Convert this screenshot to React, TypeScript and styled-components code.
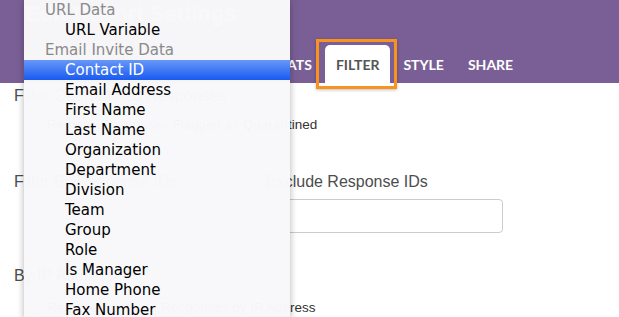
import React from "react";
import styled, { createGlobalStyle } from "styled-components";

const Global = createGlobalStyle`
  html, body { margin: 0; padding: 0; background: #fff; }
  body { width: 619px; height: 317px; overflow: hidden; position: relative; }
  * { box-sizing: border-box; }
`;

const Page = styled.div`
  position: relative;
  width: 619px;
  height: 317px;
  overflow: hidden;
  font-family: "Liberation Sans", Arial, sans-serif;
`;

const Header = styled.header`
  height: 83px;
  background: #7a5f96;
  display: flex;
  flex-direction: column;
  justify-content: space-between;
`;

const Title = styled.h1`
  margin: 0;
  padding: 2px 0 0 25px;
  height: 30px;
  line-height: 24px;
  color: #fff;
  font-family: "Liberation Sans", Arial, sans-serif;
  font-weight: 700;
  font-size: 22px;
`;

const TabBar = styled.nav`
  display: flex;
  gap: 2px;
  padding-left: 261px;
  height: 38px;
`;

const Tab = styled.div<{ $active?: boolean }>`
  position: relative;
  display: flex;
  align-items: center;
  padding: 0 11px;
  height: 38px;
  border-radius: 5px 5px 0 0;
  background: ${(p) => (p.$active ? "#fff" : "transparent")};
  color: ${(p) => (p.$active ? "#555" : "#fff")};
  font-family: Lato, "Open Sans", sans-serif;
  font-weight: 700;
  font-size: 14px;
  ${(p) =>
    p.$active &&
    `&::after {
      content: "";
      position: absolute;
      top: -6px; bottom: -6px; left: -9px; right: -7px;
      border: 3px solid #f7931e;
      box-shadow: 0 1px 3px rgba(0,0,0,0.25);
    }`}
`;

const Body = styled.main`
  padding: 3px 0 0 14px;
  color: #4d4d4d;
`;

const SectionTitle = styled.h2`
  margin: 0;
  font-size: 16px;
  font-weight: 400;
  line-height: 20px;
  color: #4d4d4d;
`;

const CheckRow = styled.label<{ $top: number }>`
  display: flex;
  align-items: center;
  gap: 4px;
  margin: ${(p) => p.$top}px 0 0 16px;
  height: 20px;
  font-size: 13.5px;
  color: #333;
`;

const Box = styled.span`
  width: 13px;
  height: 13px;
  border: 1px solid #bbb;
  border-radius: 3px;
  background: #fff;
  display: flex;
  align-items: center;
  justify-content: center;
  color: #4a90e2;
  font-size: 11px;
`;

const IdGrid = styled.div`
  display: grid;
  grid-template-columns: 252px 240px;
  margin-top: 38px;
`;

const Field = styled.div`
  display: flex;
  flex-direction: column;
  gap: 7px;
`;

const Input = styled.div<{ $indent: number }>`
  margin-left: ${(p) => p.$indent}px;
  width: 224px;
  height: 34px;
  border: 1px solid #ccc;
  border-radius: 4px;
  padding: 8px 10px;
  color: #bbb;
  font-size: 13px;
`;

const IpSection = styled.section`
  margin-top: 33px;
`;

const Menu = styled.ul`
  position: absolute;
  left: 24px;
  top: 0;
  width: 266px;
  margin: 0;
  padding: 0;
  list-style: none;
  background: rgba(248, 248, 250, 0.985);
  box-shadow: 0 0 7px rgba(0, 0, 0, 0.3);
  font-family: "DejaVu Sans", Verdana, sans-serif;
  font-size: 15px;
`;

const MenuItem = styled.li<{ $group?: boolean; $selected?: boolean }>`
  height: 20px;
  line-height: 20px;
  padding-left: ${(p) => (p.$group ? 21 : 41)}px;
  color: ${(p) => (p.$selected ? "#fff" : p.$group ? "#8a8a8a" : "#000")};
  background: ${(p) =>
    p.$selected ? "linear-gradient(#6797f8, #1a5bf0)" : "transparent"};
  white-space: nowrap;
`;

const menu: { label: string; group?: boolean; selected?: boolean }[] = [
  { label: "URL Data", group: true },
  { label: "URL Variable" },
  { label: "Email Invite Data", group: true },
  { label: "Contact ID", selected: true },
  { label: "Email Address" },
  { label: "First Name" },
  { label: "Last Name" },
  { label: "Organization" },
  { label: "Department" },
  { label: "Division" },
  { label: "Team" },
  { label: "Group" },
  { label: "Role" },
  { label: "Is Manager" },
  { label: "Home Phone" },
  { label: "Fax Number" },
];

export default function App() {
  return (
    <Page>
      <Global />
      <Header>
        <Title>Edit Report Settings</Title>
        <TabBar>
          <Tab>STATS</Tab>
          <Tab $active>FILTER</Tab>
          <Tab>STYLE</Tab>
          <Tab>SHARE</Tab>
        </TabBar>
      </Header>
      <Body>
        <section>
          <SectionTitle>Filter Quarantined Responses</SectionTitle>
          <CheckRow $top={8}>
            <Box>✓</Box>
            Remove Responses Flagged as Quarantined
          </CheckRow>
        </section>
        <IdGrid>
          <Field>
            <SectionTitle>Filter By Response IDs</SectionTitle>
            <Input $indent={16}>Ex: 1,2</Input>
          </Field>
          <Field>
            <SectionTitle>Exclude Response IDs</SectionTitle>
            <Input $indent={13} />
          </Field>
        </IdGrid>
        <IpSection>
          <SectionTitle>By IP Address</SectionTitle>
          <CheckRow $top={11}>
            <Box />
            Remove Duplicate Responses by IP Address
          </CheckRow>
        </IpSection>
      </Body>
      <Menu>
        {menu.map((m) => (
          <MenuItem key={m.label} $group={m.group} $selected={m.selected}>
            {m.label}
          </MenuItem>
        ))}
      </Menu>
    </Page>
  );
}
